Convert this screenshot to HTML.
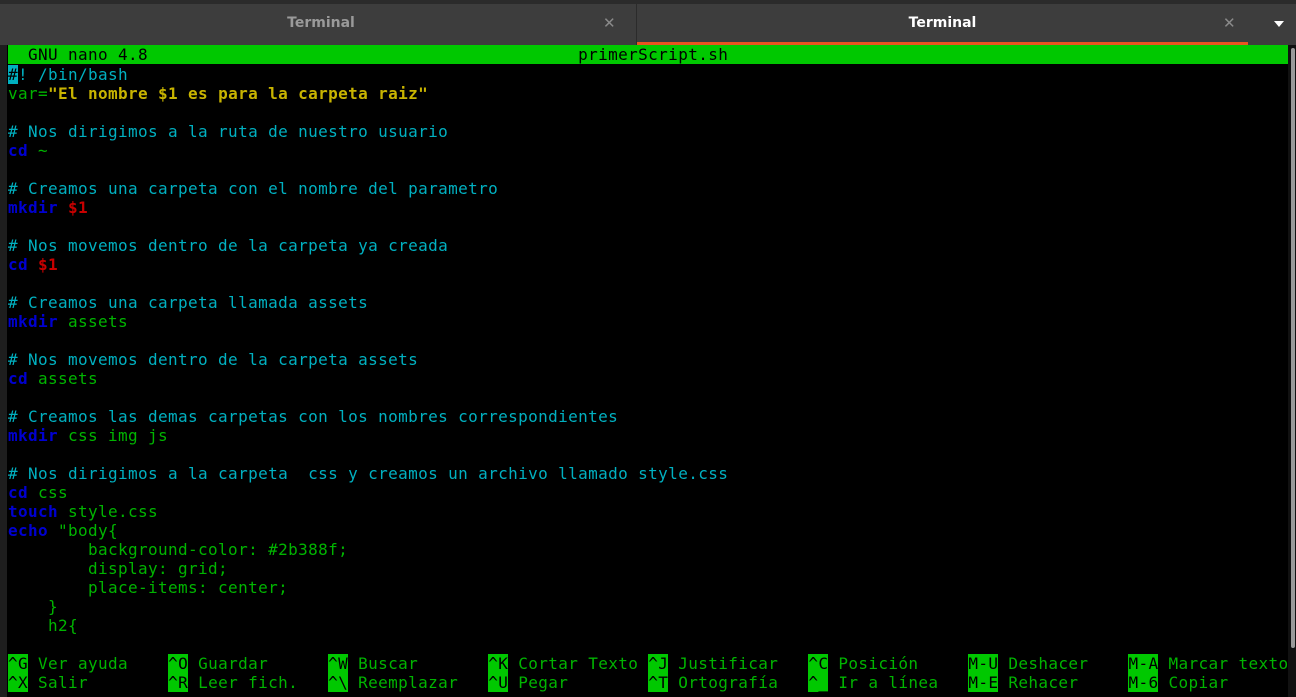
<!DOCTYPE html>
<html><head><meta charset="utf-8"><style>
html,body{margin:0;width:1296px;height:697px;overflow:hidden;}
body{background:#000;position:relative;font-family:"DejaVu Sans Mono","Liberation Mono",monospace;}
.top{position:absolute;left:0;top:0;width:1296px;height:4px;background:#2b2b2b;}
.tabs{position:absolute;left:0;top:4px;width:1296px;height:41px;background:#3d3d3d;font-family:"DejaVu Sans","Liberation Sans",sans-serif;font-weight:bold;font-size:14px;}
.tab{position:absolute;top:0;height:41px;line-height:38px;text-align:center;}
.x{position:absolute;top:0;line-height:38px;color:#8a8a8a;font-weight:normal;font-size:15px;}
.side{position:absolute;left:0;top:45px;width:7px;height:652px;background:#1e1e1e;}
.scroll{position:absolute;left:1288px;top:45px;width:8px;height:652px;background:#111;}
.thumb{position:absolute;left:1291px;top:48px;width:4px;height:600px;background:#9a9a9a;border-radius:2px;}
pre{margin:0;position:absolute;left:8px;top:46px;font-size:16px;letter-spacing:0.37px;line-height:19px;color:#00b400;font-family:inherit;}
.bar{position:absolute;left:8px;top:45px;width:1280px;height:19px;background:#00c800;}
.c{color:#00b0c0}.k{color:#0000d0;font-weight:bold}.r{color:#c80000;font-weight:bold}.y{color:#c8b400;font-weight:bold}
.h{background:#00c800;color:#000}
.cur{background:#00b0c0;color:#000}
</style></head><body>
<div class="top"></div>
<div class="tabs">
<div class="tab" style="left:7px;width:628px;color:#9a9a9a;">Terminal</div>
<span class="x" style="left:603px">✕</span>
<div style="position:absolute;left:636px;top:0;width:1px;height:41px;background:#2b2b2b"></div>
<div class="tab" style="left:637px;width:611px;color:#fff;">Terminal</div>
<span class="x" style="left:1223px">✕</span>
<div style="position:absolute;left:637px;top:38px;width:611px;height:3px;background:#e95420"></div>
<div style="position:absolute;left:1274px;top:17px;width:0;height:0;border-left:5px solid transparent;border-right:5px solid transparent;border-top:6px solid #fff"></div>
</div>
<div class="side"></div>
<div class="scroll"></div><div class="thumb"></div>
<div class="bar"></div>
<pre style="color:#000;top:45px">  GNU nano 4.8                                           primerScript.sh</pre>
<pre style="top:65px"><span class="cur">#</span><span class="c">! /bin/bash</span>
var=<span class="y">"El nombre $1 es para la carpeta raiz"</span>

<span class="c"># Nos dirigimos a la ruta de nuestro usuario</span>
<span class="k">cd</span> ~

<span class="c"># Creamos una carpeta con el nombre del parametro</span>
<span class="k">mkdir</span> <span class="r">$1</span>

<span class="c"># Nos movemos dentro de la carpeta ya creada</span>
<span class="k">cd</span> <span class="r">$1</span>

<span class="c"># Creamos una carpeta llamada assets</span>
<span class="k">mkdir</span> assets

<span class="c"># Nos movemos dentro de la carpeta assets</span>
<span class="k">cd</span> assets

<span class="c"># Creamos las demas carpetas con los nombres correspondientes</span>
<span class="k">mkdir</span> css img js

<span class="c"># Nos dirigimos a la carpeta  css y creamos un archivo llamado style.css</span>
<span class="k">cd</span> css
<span class="k">touch</span> style.css
<span class="k">echo</span> "body{
        background-color: #2b388f;
        display: grid;
        place-items: center;
    }
    h2{

<span class="h">^G</span> Ver ayuda    <span class="h">^O</span> Guardar      <span class="h">^W</span> Buscar       <span class="h">^K</span> Cortar Texto <span class="h">^J</span> Justificar   <span class="h">^C</span> Posición     <span class="h">M-U</span> Deshacer    <span class="h">M-A</span> Marcar texto
<span class="h">^X</span> Salir        <span class="h">^R</span> Leer fich.   <span class="h">^\</span> Reemplazar   <span class="h">^U</span> Pegar        <span class="h">^T</span> Ortografía   <span class="h">^_</span> Ir a línea   <span class="h">M-E</span> Rehacer     <span class="h">M-6</span> Copiar</pre>
</body></html>
